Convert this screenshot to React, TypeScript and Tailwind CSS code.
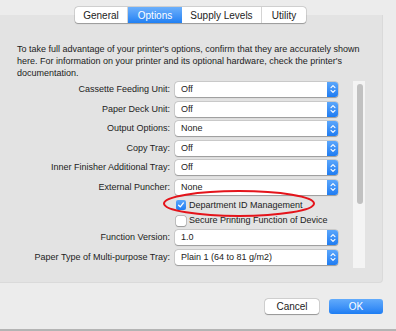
import React from "react";

const font = { fontFamily: '"Liberation Sans", Arial, Helvetica, sans-serif' };

function Popup({ value }: { value: string }) {
  return (
    <div className="flex h-[15px] w-[163px] items-stretch rounded-[3px] bg-white shadow-[0_0_0_0.5px_rgba(0,0,0,0.18),0_0.5px_1px_rgba(0,0,0,0.25)]">
      <div className="flex flex-1 items-center whitespace-nowrap pl-[6px] text-[9px] leading-none text-[#222]">{value}</div>
      <div className="flex w-[11px] items-center justify-center rounded-r-[3px] bg-gradient-to-b from-[#5aa6fb] to-[#1d7cf2]">
        <svg width="6" height="10" viewBox="0 0 6 10" fill="none">
          <path d="M1 3.6 L3 1.6 L5 3.6" stroke="white" strokeWidth="1.1" strokeLinecap="round" strokeLinejoin="round" />
          <path d="M1 6.4 L3 8.4 L5 6.4" stroke="white" strokeWidth="1.1" strokeLinecap="round" strokeLinejoin="round" />
        </svg>
      </div>
    </div>
  );
}

function Row({ label, value, h }: { label: string; value: string; h: string }) {
  return (
    <div className={`flex items-center ${h}`}>
      <div className="w-[153px] whitespace-nowrap text-right text-[9px] leading-none text-[#222]">{label}</div>
      <div className="ml-[5px]">
        <Popup value={value} />
      </div>
    </div>
  );
}

function Check({ checked, label, h }: { checked: boolean; label: string; h: string }) {
  return (
    <div className={`flex items-center ${h}`}>
      <div className="ml-[159px] flex items-center">
        {checked ? (
          <div className="flex h-[10px] w-[10px] items-center justify-center rounded-[2px] bg-gradient-to-b from-[#5aa6fb] to-[#1d7cf2]">
            <svg width="8" height="8" viewBox="0 0 8 8" fill="none">
              <path d="M1.6 4.2 L3.3 5.9 L6.4 1.9" stroke="white" strokeWidth="1.3" strokeLinecap="round" strokeLinejoin="round" />
            </svg>
          </div>
        ) : (
          <div className="h-[10px] w-[10px] rounded-[2px] bg-white shadow-[0_0_0_0.5px_rgba(0,0,0,0.3),0_0.5px_1px_rgba(0,0,0,0.2)]" />
        )}
        <span className="ml-[3px] whitespace-nowrap text-[9px] leading-none text-[#222]">{label}</span>
      </div>
    </div>
  );
}

export default function App() {
  return (
    <div className="relative h-[331px] w-[396px] overflow-hidden bg-[#ececec]" style={font}>
      <div className="flex flex-col">
        <div className="relative z-10 ml-[75px] mt-[7px] flex h-[16px] w-[231px] overflow-hidden rounded-[3px] bg-white text-[10px] text-[#222] shadow-[0_0_0_0.5px_rgba(0,0,0,0.2),0_0.5px_1px_rgba(0,0,0,0.25)]">
          <div className="flex w-[53px] items-center justify-center border-r border-[#d4d4d4]">General</div>
          <div className="flex w-[54px] items-center justify-center bg-gradient-to-b from-[#6cb0fb] to-[#1f80f3] text-white">Options</div>
          <div className="flex w-[80px] items-center justify-center border-r border-[#d4d4d4]">Supply Levels</div>
          <div className="flex w-[44px] items-center justify-center">Utility</div>
        </div>
        <div className="relative -mt-[8px] h-[268px] w-[383px] rounded-br-[4px] border-b border-r border-[#dadada] bg-[#e3e3e3]">
          <p className="ml-[17px] mt-[28px] w-[350px] text-[9px] leading-[12px] text-[#222]">
            To take full advantage of your printer's options, confirm that they are accurately shown here. For information on your printer and its optional hardware, check the printer's documentation.
          </p>
          <div className="mt-[0px] flex">
            <div className="ml-[17px] flex w-[336px] flex-col">
              <Row label="Cassette Feeding Unit:" value="Off" h="h-[20px]" />
              <Row label="Paper Deck Unit:" value="Off" h="h-[20px]" />
              <Row label="Output Options:" value="None" h="h-[19px]" />
              <Row label="Copy Tray:" value="Off" h="h-[20px]" />
              <Row label="Inner Finisher Additional Tray:" value="Off" h="h-[19px]" />
              <Row label="External Puncher:" value="None" h="h-[20px]" />
              <Check checked label="Department ID Management" h="h-[16px]" />
              <Check checked={false} label="Secure Printing Function of Device" h="h-[15px]" />
              <Row label="Function Version:" value="1.0" h="h-[19px]" />
              <Row label="Paper Type of Multi-purpose Tray:" value="Plain 1 (64 to 81 g/m2)" h="h-[20px]" />
            </div>
            <div className="mt-[2px] h-[187px] w-[12px] bg-[#f4f4f4] pl-[4px] pt-[3px]">
              <div className="h-[120px] w-[6px] rounded-full bg-[#c1c1c1]" />
            </div>
          </div>
          <svg className="absolute left-[162px] top-[175px]" width="154" height="30" viewBox="0 0 154 30" fill="none">
            <ellipse cx="77" cy="13.5" rx="75" ry="12.5" stroke="#e4141b" strokeWidth="2" />
          </svg>
        </div>
        <div className="ml-[265px] mt-[16px] flex gap-[10px]">
          <div className="flex h-[15px] w-[54px] items-center justify-center rounded-[3px] bg-white text-[10px] text-[#222] shadow-[0_0_0_0.5px_rgba(0,0,0,0.2),0_0.5px_1px_rgba(0,0,0,0.3)]">Cancel</div>
          <div className="flex h-[15px] w-[54px] items-center justify-center rounded-[3px] bg-gradient-to-b from-[#62abfb] to-[#1c7df3] text-[10px] text-white">OK</div>
        </div>
      </div>
      <div className="absolute bottom-0 left-0 h-[2px] w-full bg-[#b4b4b4]" />
    </div>
  );
}
